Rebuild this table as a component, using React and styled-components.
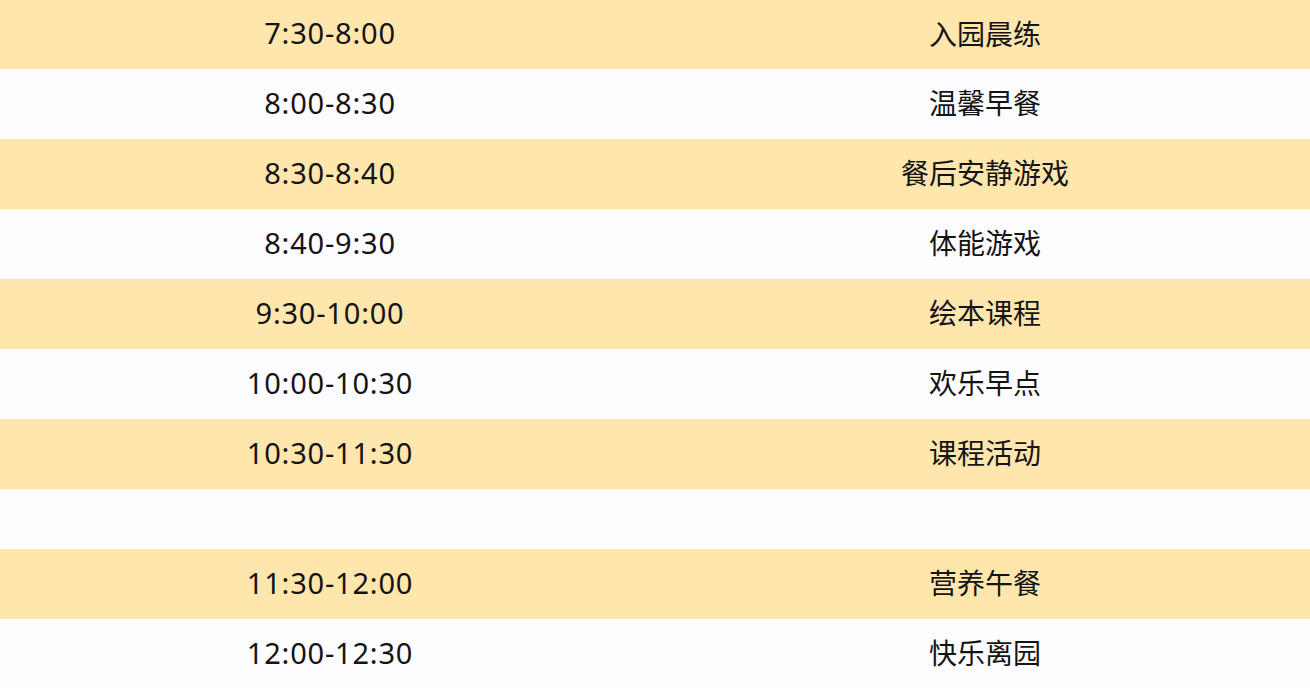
import styled, { createGlobalStyle } from "styled-components";

const GlobalStyle = createGlobalStyle`
  html, body {
    margin: 0;
    padding: 0;
    background: #fdfcff;
  }
  body {
    font-family: "Noto Sans", "Noto Sans CJK SC", sans-serif;
    color: #141414;
  }
`;

const Table = styled.div`
  width: 1310px;
  height: 688px;
  overflow: hidden;
  display: flex;
  flex-direction: column;
`;

const Row = styled.div`
  display: grid;
  grid-template-columns: 660px 1fr;
  align-items: center;
  flex: 0 0 ${({ $h }) => $h || 70}px;
  padding-bottom: 4px;
  box-sizing: border-box;
  background: ${({ $striped }) => ($striped ? "#fee6ad" : "#fdfcff")};
`;

const Time = styled.div`
  text-align: center;
  font-size: 29px;
  letter-spacing: 0.8px;
  line-height: 1;
`;

const Activity = styled.div`
  text-align: center;
  font-family: "Noto Sans CJK SC", sans-serif;
  font-size: 28px;
  line-height: 1;
`;

const schedule = [
  ["7:30-8:00", "入园晨练"],
  ["8:00-8:30", "温馨早餐"],
  ["8:30-8:40", "餐后安静游戏"],
  ["8:40-9:30", "体能游戏"],
  ["9:30-10:00", "绘本课程"],
  ["10:00-10:30", "欢乐早点"],
  ["10:30-11:30", "课程活动"],
  null,
  ["11:30-12:00", "营养午餐"],
  ["12:00-12:30", "快乐离园"],
];

export default function App() {
  let stripe = true;
  return (
    <>
      <GlobalStyle />
      <Table>
        {schedule.map((item, i) => {
          if (!item) {
            stripe = true;
            return <Row key={i} $h={60} />;
          }
          const striped = stripe;
          stripe = !stripe;
          return (
            <Row key={i} $striped={striped} $h={i === 0 ? 69 : 70}>
              <Time>{item[0]}</Time>
              <Activity>{item[1]}</Activity>
            </Row>
          );
        })}
      </Table>
    </>
  );
}
